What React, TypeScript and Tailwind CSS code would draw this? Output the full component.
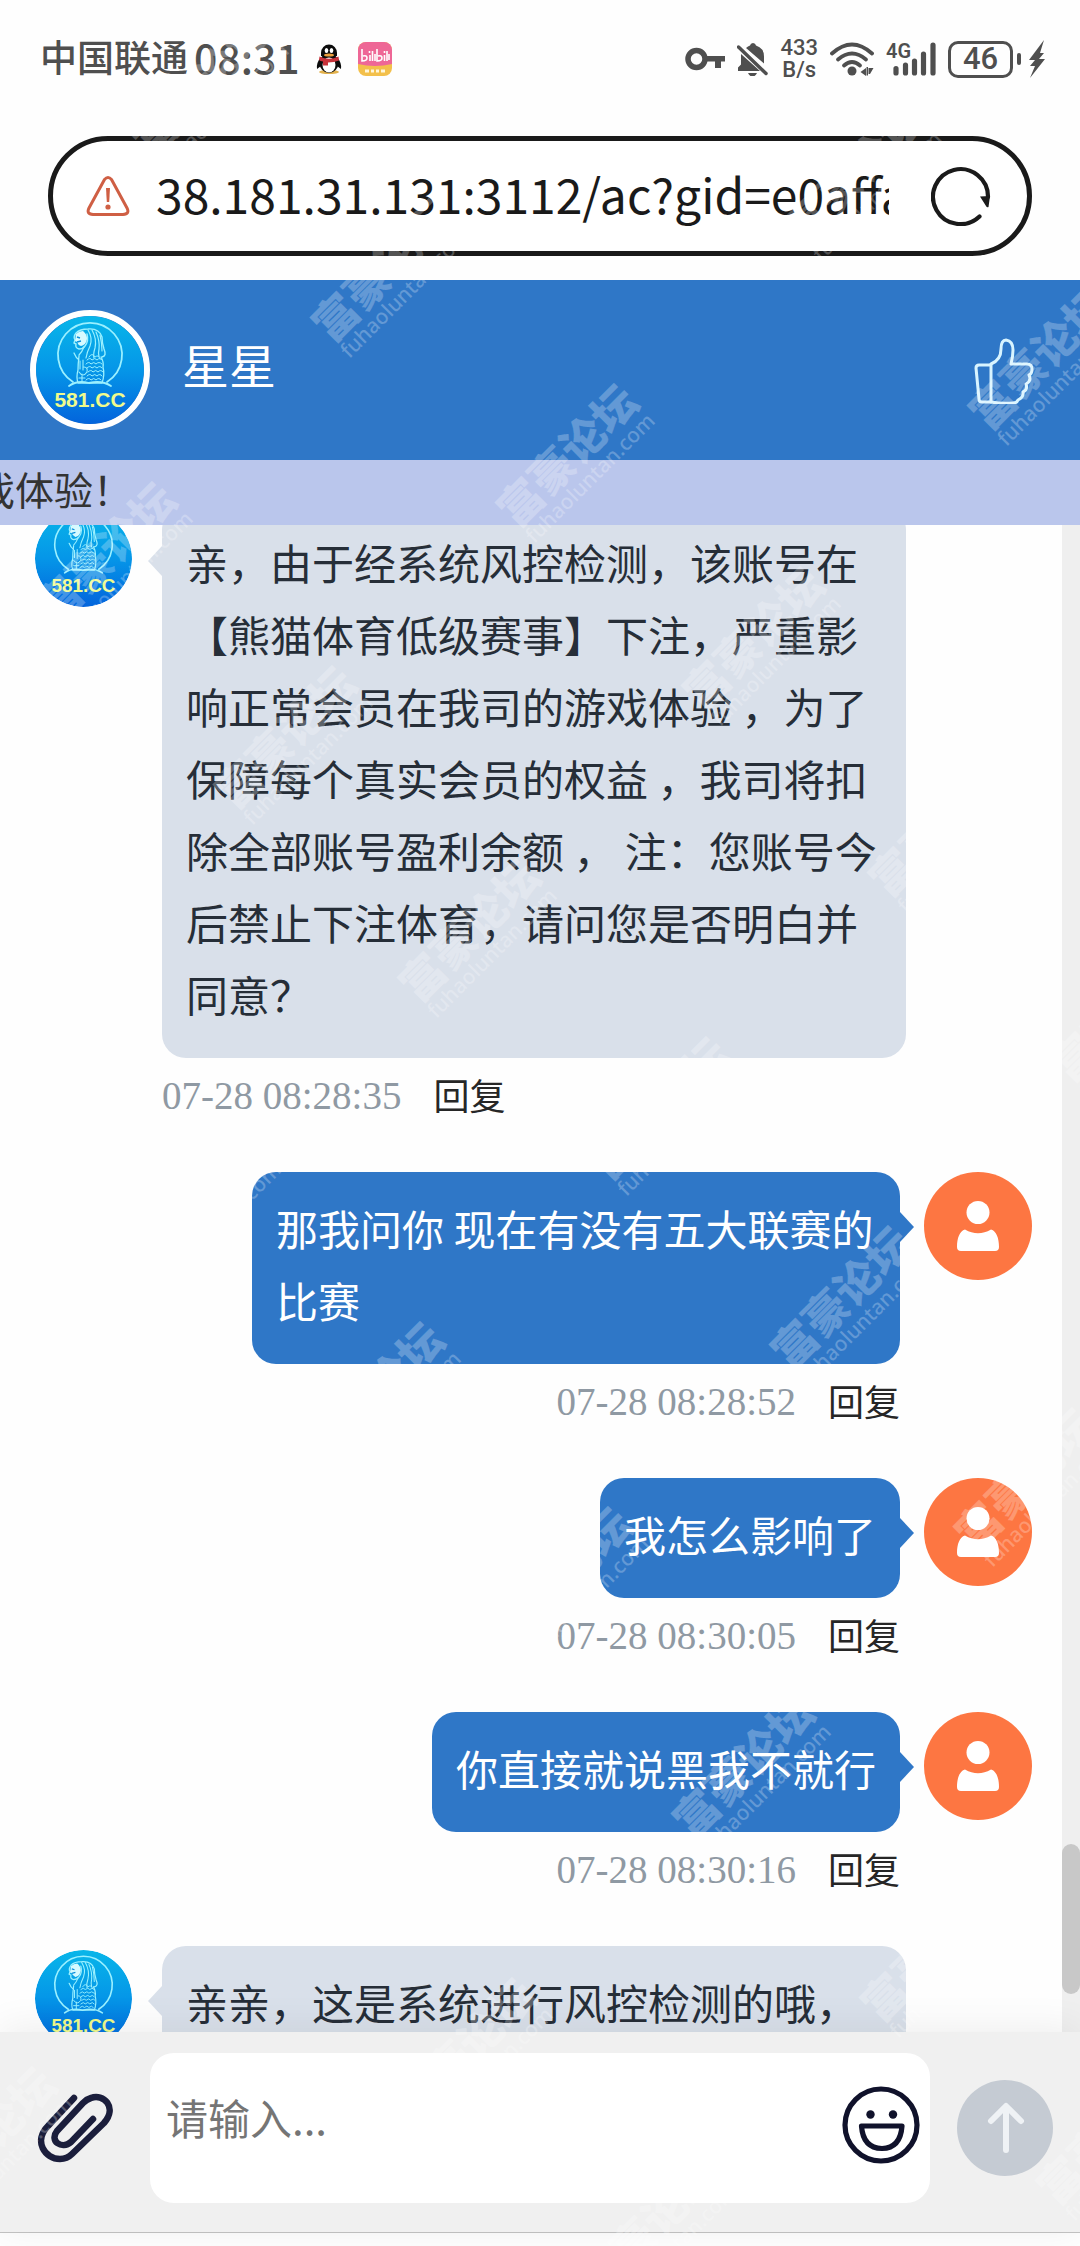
import { useState } from 'react';

const sans = "font-['Noto_Sans_CJK_SC',sans-serif]";

interface Message {
  id: number;
  from: 'agent' | 'user';
  text: string;
  time: string;
}

const messages: Message[] = [
  {
    id: 1,
    from: 'agent',
    text: '亲，由于经系统风控检测，该账号在【熊猫体育低级赛事】下注，严重影响正常会员在我司的游戏体验 ，为了保障每个真实会员的权益 ，我司将扣除全部账号盈利余额 ， 注：您账号今后禁止下注体育，请问您是否明白并同意？',
    time: '07-28 08:28:35',
  },
  { id: 2, from: 'user', text: '那我问你 现在有没有五大联赛的比赛', time: '07-28 08:28:52' },
  { id: 3, from: 'user', text: '我怎么影响了', time: '07-28 08:30:05' },
  { id: 4, from: 'user', text: '你直接就说黑我不就行', time: '07-28 08:30:16' },
  { id: 5, from: 'agent', text: '亲亲，这是系统进行风控检测的哦，', time: '07-28 08:30:40' },
];

// centre points of the repeated forum stamp
const stamps = [
  [208, 92], [861, 180], [389, 277], [1046, 365], [574, 462], [112, 560],
  [760, 645], [292, 744], [946, 832], [476, 937], [1128, 1017], [666, 1115],
  [200, 1211], [848, 1304], [380, 1400], [1032, 1486], [568, 1585], [750, 1773],
  [288, 1863], [938, 1957], [472, 2056], [-8, 2145], [1114, 2140], [656, 2233],
];

function BrandLogo() {
  return (
    <svg viewBox="0 0 108 108" className="block size-full">
      <defs>
        <linearGradient id="brand-sky" x1="0" y1="0" x2="0" y2="1">
          <stop offset="0" stopColor="#08b6e9" />
          <stop offset="0.5" stopColor="#0596e8" />
          <stop offset="1" stopColor="#0364dc" />
        </linearGradient>
      </defs>
      <circle cx="54" cy="54" r="54" fill="url(#brand-sky)" />
      <g fill="none" stroke="#9af0ff" strokeLinecap="round" strokeLinejoin="round">
        <path d="M37 66A32 32 0 1 1 71 66" strokeWidth="1.8" />
        <path d="M33 70q8-6 20-3q13-3 22 3" strokeWidth="1.8" />
        <path
          d="M40 17q4-4 12-4q11-1 14 8q0 6 2 12q3 7-2 8M40 17q-3 4-1 7l-1 3 2 1q-1 4 3 5q4 0 6-3q4-5 2-12"
          strokeWidth="1.4"
        />
        <path
          d="M52 14q5 8 2 16q-3 6-4 12M56 14q5 9 3 18q-2 6-1 10M60 16q4 9 3 17q-1 4 0 8M48 31q-2 5-5 8M64 19q2 8 2 16"
          strokeWidth="1.2"
        />
        <path d="M38 37q2 5 5 7M43 40q-1 8-1 14q-2 7 0 13h24q3-8 1-16q1-5-2-10" strokeWidth="1.3" />
        <path
          d="M53 41q3-5 6 0q4-3 5 2M51 44q3-3 5 0q3-3 5 0q3-3 5 0M50 48q3-3 5 0q3-3 5 0q3-3 6 0M51 52q3-3 5 0q3-3 5 0q3-3 5 0M52 56q3-3 5 0q3-3 5 0q3-3 5 0M51 60q3-3 5 0q3-3 5 0q3-3 5 0M50 64q3-3 5 0q3-3 5 0q3-3 5 0"
          strokeWidth="1"
        />
        <path d="M44 45v8M47 44v10M43 56q4 6 8 0q1-5-3-5M43 62h6M46 58v8" strokeWidth="1.1" />
      </g>
      <path d="M40 18q3-3 7-3q4 3 4 8q-1 6-6 7q-3-1-4-4l-2-1z" fill="#d6faff" />
      <path d="M41 21l3 1M41 26l4-1" stroke="#0a8fdc" strokeWidth="1.4" />
      <text
        x="54"
        y="91"
        textAnchor="middle"
        fontSize="21"
        fontWeight="700"
        fill="#f0fb8c"
        fontFamily="Liberation Sans, sans-serif"
      >
        581.CC
      </text>
    </svg>
  );
}

function UserAvatar() {
  return (
    <svg viewBox="0 0 108 108" className="size-[108px] shrink-0">
      <circle cx="54" cy="54" r="54" fill="#fd7642" />
      <circle cx="54" cy="40.500" r="11.500" fill="#fff" />
      <path d="M41 57.500q13 7.500 26 0c5.500 1.500 8 9 8 17.500q0 4-4 4H37q-4 0-4-4c0-8.500 2.500-16 8-17.500z" fill="#fff" />
    </svg>
  );
}

function StatusBar() {
  return (
    <div className="flex h-[118px] items-center justify-between pl-[40px] pr-[35px] text-[#4f4f4f]">
      <div className="flex items-center">
        <span className="pb-1 text-[37px] font-medium">中国联通</span>
        <span className="ml-1.5 pb-1 text-[41px] font-medium">08:31</span>
        <svg viewBox="0 0 26 30" className="ml-4 h-[30px] w-[26px]">
          <ellipse cx="13" cy="28" rx="10" ry="2" fill="#e3b24d" />
          <path d="M5 13Q0 19 1 25l4-3zM21 13q5 6 4 12l-4-3z" fill="#0c0c0c" />
          <ellipse cx="13" cy="19" rx="9.500" ry="10" fill="#0c0c0c" />
          <ellipse cx="13" cy="21" rx="6.500" ry="7.500" fill="#fff" />
          <path d="M5 12V9a8 8.500 0 0 1 16 0v3z" fill="#0c0c0c" />
          <ellipse cx="10.500" cy="6.500" rx="1.800" ry="2.500" fill="#fff" />
          <ellipse cx="15.500" cy="6.500" rx="1.800" ry="2.500" fill="#fff" />
          <ellipse cx="13" cy="11" rx="5" ry="1.600" fill="#eda03c" />
          <path d="M3.500 12.500q9.500 4.500 19 0l.5 4q-5 2-11 2v3H7v-4q-3-.5-4-1.500z" fill="#c8323a" />
        </svg>
        <svg viewBox="0 0 34 34" className="ml-4 size-[34px]">
          <rect width="34" height="34" rx="8" fill="#f3c04b" />
          <path d="M0 22V8a8 8 0 0 1 8-8h18a8 8 0 0 1 8 8v14q-17 4-34 0z" fill="#ee6796" />
          <path
            d="M4 7v12q5 0 5-3t-4-2M12 13v6M11.500 9v2M14.500 9v10M17 12v7M19 7v12q5 0 5-3t-4-2M26.500 13v6M26.500 9v2M29 9v10M31 12v6"
            fill="none"
            stroke="#fff"
            strokeWidth="1.600"
          />
          <path d="M7 29h4M13 29h3M18 29h3M23 29h4" stroke="#fff6da" strokeWidth="3" />
        </svg>
      </div>

      <div className="flex items-center gap-3">
        <svg viewBox="0 0 40 24" className="h-6 w-10">
          <circle cx="11.500" cy="12" r="8.500" fill="none" stroke="currentColor" strokeWidth="5.500" />
          <path d="M20 9h20v5.500h-4V21h-6v-6.500H20z" fill="currentColor" />
        </svg>
        <svg viewBox="0 0 31 34" className="h-[34px] w-[31px]">
          <path
            d="M9 6q2-2 4-2.500q.5-2.500 3-2.500t3 2.500q8 2.500 8 11v7zM4 12l19 17H1v-3.500l3-3zM11 31h9q-1.500 3.500-4.500 3.500T11 31z"
            fill="currentColor"
          />
          <path d="M1.500 5L29 31.500" stroke="currentColor" strokeWidth="3.500" strokeLinecap="round" />
        </svg>
        <div className="text-center font-[Roboto,sans-serif] text-[22px] font-medium leading-[22px]">
          <div>433</div>
          <div>B/s</div>
        </div>
        <svg viewBox="0 0 44 34" className="h-[34px] w-11">
          <g fill="none" stroke="currentColor" strokeWidth="3.800" strokeLinecap="round">
            <path d="M2 11.500q20-18 40 0" />
            <path d="M8 17.500q14-12 28 0" />
            <path d="M14 23.500q8-7 16 0" />
          </g>
          <circle cx="22" cy="29" r="4.500" fill="currentColor" />
          <path d="M36 26v8l-5.500-4zM38 25v8.500h-1.500V25zM38.500 26h5l-3.500 6h-1.500z" fill="currentColor" />
        </svg>
        <svg viewBox="0 0 50 34" className="h-[34px] w-[50px]">
          <text x="0" y="16" fontSize="20" fontWeight="600" fill="currentColor" fontFamily="Roboto, sans-serif">
            4G
          </text>
          <path
            d="M10 26.500V31M19.500 23V31M28.500 19V31M37.500 12V31M47 3V31"
            stroke="currentColor"
            strokeWidth="5.200"
            strokeLinecap="round"
          />
        </svg>
        <div className="flex items-center">
          <span className="flex h-[37px] w-[65px] items-center justify-center rounded-[10px] border-[3px] border-current font-[Roboto,sans-serif] text-[31px] font-medium">
            46
          </span>
          <span className="ml-1 h-3 w-1 rounded-sm bg-current" />
          <svg viewBox="0 0 16 38" className="ml-2 h-[38px] w-4">
            <path d="M15 0L0 20h6L1 26h5L1 38l15-19h-6l5-6h-4z" fill="currentColor" />
          </svg>
        </div>
      </div>
    </div>
  );
}

function AddressBar() {
  return (
    <div className="mx-12 mt-[18px] flex h-[120px] items-center rounded-full border-[5px] border-[#1a1a1a] bg-white pl-[33px] pr-[36px]">
      <svg viewBox="0 0 44 40" className="h-10 w-11 shrink-0">
        <path
          d="M18.500 3.500q3.500-4 7 0L41 32q3 6-4 6.500H7Q0 38 3 32z"
          fill="none"
          stroke="#cf5f44"
          strokeWidth="3"
          strokeLinejoin="round"
        />
        <path d="M20 12h4l-.8 14h-2.400z" fill="#cf5f44" />
        <circle cx="22" cy="31" r="2.600" fill="#cf5f44" />
      </svg>
      <input
        aria-label="网址"
        readOnly
        defaultValue="38.181.31.131:3112/ac?gid=e0affa"
        className="ml-[26px] h-[76px] min-w-0 flex-1 bg-transparent pb-1.5 text-[48px] text-[#1a1a1a] outline-none"
      />
      <button aria-label="刷新" className="ml-[42px] shrink-0">
        <svg viewBox="0 0 60 60" className="size-[60px]">
          <path
            d="M48.500 50.500A27.500 27.500 0 1 1 57 31"
            fill="none"
            stroke="#1a1a1a"
            strokeWidth="4.200"
            strokeLinecap="round"
          />
          <path d="M49 30.500l10-.5-1.500 11q-1.500 1-2.500-1z" fill="#1a1a1a" />
        </svg>
      </button>
    </div>
  );
}

function ChatHeader() {
  return (
    <header className="mt-6 flex h-[180px] shrink-0 items-center bg-[#2f77c7] pl-[30px] pr-[46px]">
      <div className="size-[120px] overflow-hidden rounded-full border-[6px] border-white">
        <BrandLogo />
      </div>
      <h1 className="ml-8 flex-1 pb-3 text-[47px] leading-[60px] text-white">星星</h1>
      <button aria-label="点赞">
        <svg viewBox="0 0 60 68" className="h-[68px] w-[60px]">
          <g fill="none" stroke="#d8f4ff" strokeWidth="3" strokeLinejoin="round" strokeLinecap="round">
            <path d="M17 29H5q-3 0-3 3l3 31q0 3 3 3h9z" />
            <path d="M17 28q10-4 10-15q0-9 5-9q7 1 7 10q0 6-2 14h16q5 0 5 5t-3 6q3 6-3 9q2 6-3 8q1 5-5 8q-1 3-5 3q-11 1-22-1" />
          </g>
        </svg>
      </button>
    </header>
  );
}

function Bubble({ message }: { message: Message }) {
  const mine = message.from === 'user';

  return (
    <div className={mine ? 'flex justify-end gap-6 pr-[30px]' : 'flex gap-[30px] pl-[35px]'}>
      {!mine && (
        <div className="mt-1 size-[97px] shrink-0 overflow-hidden rounded-full">
          <BrandLogo />
        </div>
      )}
      <div className={mine ? 'flex max-w-[648px] flex-col items-end' : 'flex max-w-[744px] flex-1 flex-col'}>
        <div
          className={
            mine
              ? 'relative rounded-3xl bg-[#2f77c7] px-6 pb-7 pt-5 text-[42px] leading-[72px] text-white'
              : 'relative rounded-3xl bg-[#d9e0ea] px-6 pb-7 pt-5 text-[42px] leading-[72px] text-[#262e38]'
          }
        >
          {message.text}
          {mine ? (
            <span className="absolute left-full top-10 border-y-[15px] border-l-[14px] border-y-transparent border-l-[#2f77c7]" />
          ) : (
            <span className="absolute right-full top-10 border-y-[15px] border-r-[14px] border-y-transparent border-r-[#d9e0ea]" />
          )}
        </div>
        <div className="flex h-[76px] items-center gap-8">
          <time className="font-['Liberation_Serif',serif] text-[39px] text-[#8f99a3]">{message.time}</time>
          <button className="pb-1 text-[36px] text-[#262626]">回复</button>
        </div>
      </div>
      {mine && <UserAvatar />}
    </div>
  );
}

function Composer() {
  const [draft, setDraft] = useState('');

  return (
    <footer className="relative flex h-[200px] shrink-0 items-center bg-[#f0f0f0] pb-2 pl-[37px] pr-[27px] shadow-[0_-4px_36px_rgba(0,0,0,0.07)]">
      <button aria-label="附件" className="shrink-0">
        <svg viewBox="0 0 76 70" className="h-[70px] w-[76px]">
          <path
            d="M37 5L11 33C-4 48 8 66 23 66Q30 66 35 61L67 30C81 14 66 0 54 5Q50 6 46 10L20 38C12 48 25 57 34 49L56 26"
            fill="none"
            stroke="#1b1e3c"
            strokeWidth="6.500"
            strokeLinecap="round"
            strokeLinejoin="round"
          />
        </svg>
      </button>
      <div className="ml-[37px] flex h-[150px] flex-1 items-center rounded-3xl bg-white pr-[10px]">
        <textarea
          aria-label="消息"
          placeholder="请输入..."
          value={draft}
          onChange={(e) => setDraft(e.target.value)}
          className="h-full min-w-0 flex-1 resize-none bg-transparent pl-4 pt-[34px] text-[42px] leading-[60px] text-[#262e38] outline-none placeholder:text-[#757575]"
        />
        <button aria-label="表情" className="mb-1.5 shrink-0">
          <svg viewBox="0 0 78 78" className="size-[78px]">
            <g fill="none" stroke="#10122b" strokeWidth="5.200" strokeLinejoin="round">
              <circle cx="39" cy="39" r="36" />
              <path d="M19.500 40h40.500q-1.500 22-20 22.500Q21 62 19.500 40z" />
            </g>
            <circle cx="28.500" cy="28.500" r="4.200" fill="#10122b" />
            <circle cx="51" cy="28.500" r="4.200" fill="#10122b" />
          </svg>
        </button>
      </div>
      <button aria-label="发送" className="ml-[27px] size-24 shrink-0 rounded-full bg-[#c5cbd3]">
        <svg viewBox="0 0 96 96" className="size-24">
          <path
            d="M49 70V27M34 41l15-15 15 15"
            fill="none"
            stroke="#eff2f5"
            strokeWidth="6"
            strokeLinecap="round"
            strokeLinejoin="round"
          />
        </svg>
      </button>
    </footer>
  );
}

export default function App() {
  return (
    <div className={`${sans} relative flex h-screen flex-col overflow-hidden bg-[#fefefe]`}>
      <StatusBar />
      <AddressBar />
      <ChatHeader />

      <div className="flex h-[65px] shrink-0 items-center bg-[#bac6ec] pb-2">
        <div className="flex w-[132px] justify-end overflow-hidden">
          <p className="shrink-0 whitespace-nowrap text-[39px] leading-[57px] text-[#333]">戏体验！</p>
        </div>
      </div>

      <main className="flex min-h-0 flex-1 overflow-hidden">
        <div className="-mt-[19px] flex flex-1 flex-col gap-[38px]">
          {messages.map((message) => (
            <Bubble key={message.id} message={message} />
          ))}
        </div>
        <div className="w-[18px] bg-[#efefef]">
          <div className="h-[87.5%]" />
          <div className="h-[10%] rounded-full bg-[#c8c8c8]" />
        </div>
      </main>

      <Composer />
      <div className="h-[14px] shrink-0 border-t border-[#c4c4c4] bg-[#fefefe]" />

      <div aria-hidden="true" className="pointer-events-none absolute inset-0 select-none overflow-hidden">
        {stamps.map(([x, y]) => (
          <div
            key={`${x}-${y}`}
            style={{ left: x, top: y }}
            className="absolute -translate-x-1/2 -translate-y-1/2 -rotate-45 whitespace-nowrap text-center text-white/25"
          >
            <p className="text-[44px] font-black leading-[44px]">富豪论坛</p>
            <p className="font-['Noto_Sans',sans-serif] text-[21px] font-medium leading-[24px]">fuhaoluntan.com</p>
          </div>
        ))}
      </div>
    </div>
  );
}
